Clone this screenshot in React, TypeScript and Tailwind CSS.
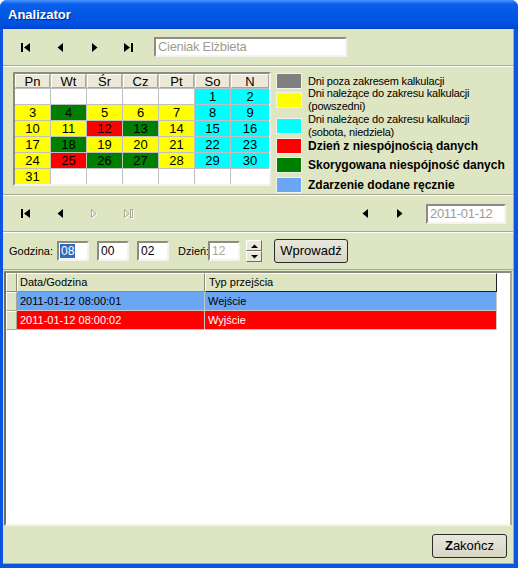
import React from 'react';

type Kind = 'first' | 'prev' | 'next' | 'last';

// small VCR style arrows drawn as svg
const NavIcon = ({ kind, disabled = false }: { kind: Kind; disabled?: boolean }) => {
  if (disabled) {
    const tri = kind === 'next' ? '3.5,0.5 3.5,8.5 8,4.5' : '2.5,0.5 2.5,8.5 7,4.5';
    const shape = (color: string, dx: number) => (
      <g transform={`translate(${dx},${dx})`} fill="none" stroke={color} strokeWidth="1">
        <polygon points={tri} />
        {kind === 'last' && <rect x="8.5" y="0.5" width="2" height="8" />}
      </g>
    );
    return (
      <svg width="12" height="10" viewBox="0 0 12 10">
        {shape('#ffffff', 1)}
        {shape('#aca899', 0)}
      </svg>
    );
  }
  return (
    <svg width="11" height="9" viewBox="0 0 11 9">
      {kind === 'first' && (
        <>
          <rect x="0" y="0" width="2" height="9" fill="#000" />
          <polygon points="9,0 9,9 3,4.5" fill="#000" />
        </>
      )}
      {kind === 'prev' && <polygon points="8,0 8,9 2.5,4.5" fill="#000" />}
      {kind === 'next' && <polygon points="3,0 3,9 8.5,4.5" fill="#000" />}
      {kind === 'last' && (
        <>
          <polygon points="1,0 1,9 7,4.5" fill="#000" />
          <rect x="8" y="0" width="2" height="9" fill="#000" />
        </>
      )}
    </svg>
  );
};

const NavBtn = ({ kind, disabled }: { kind: Kind; disabled?: boolean }) => (
  <div className="w-[34px] h-[24px] flex items-center justify-center">
    <NavIcon kind={kind} disabled={disabled} />
  </div>
);

const sunken = 'border-2 border-t-[#8d8b80] border-l-[#8d8b80] border-b-[#f4f3ee] border-r-[#f4f3ee]';

type C = 'w' | 'y' | 'c' | 'r' | 'g';
const cellBg: Record<C, string> = {
  w: 'bg-white',
  y: 'bg-[#ffff00]',
  c: 'bg-[#00ffff]',
  r: 'bg-[#ff0000]',
  g: 'bg-[#008000]',
};

const calendar =
  'w w w w w c1 c2|y3 g4 y5 y6 y7 c8 c9|y10 y11 r12 g13 y14 c15 c16|y17 g18 y19 y20 y21 c22 c23|y24 r25 g26 g27 y28 c29 c30|y31 w w w w w w';

const weeks = calendar.split('|').map((row) =>
  row.split(' ').map((t) => ({ c: t[0] as C, d: t.slice(1) }))
);

const days = ['Pn', 'Wt', 'Śr', 'Cz', 'Pt', 'So', 'N'];

const legend = [
  { sw: 'bg-[#808080]', lines: ['Dni poza zakresem kalkulacji'], bold: false, mt: 'mt-[6px]' },
  { sw: 'bg-[#ffff00]', lines: ['Dni należące do zakresu kalkulacji', '(powszedni)'], bold: false, mt: 'mt-[3px]' },
  { sw: 'bg-[#00ffff]', lines: ['Dni należące do zakresu kalkulacji', '(sobota, niedziela)'], bold: false, mt: 'mt-[10px]' },
  { sw: 'bg-[#ff0000]', lines: ['Dzień z niespójnością danych'], bold: true, mt: 'mt-[4px]' },
  { sw: 'bg-[#008000]', lines: ['Skorygowana niespójność danych'], bold: true, mt: 'mt-[3px]' },
  { sw: 'bg-[#6aa6f4]', lines: ['Zdarzenie dodane ręcznie'], bold: true, mt: 'mt-[4px]' },
];

const rows = [
  { date: '2011-01-12 08:00:01', type: 'Wejście', bg: 'bg-[#6aa6f4]', fg: 'text-black' },
  { date: '2011-01-12 08:00:02', type: 'Wyjście', bg: 'bg-[#ff0000]', fg: 'text-white' },
];

const SpinArrow = ({ up }: { up: boolean }) => (
  <svg width="7" height="4" viewBox="0 0 7 4">
    <polygon points={up ? '0,4 7,4 3.5,0.5' : '0,0 7,0 3.5,3.5'} fill="#000" />
  </svg>
);

const App = () => {
  return (
    <div className="w-[518px] h-[568px] bg-[#0b55e5] rounded-t-[7px] overflow-hidden flex flex-col font-['Liberation_Sans',Arial,sans-serif] text-black">
      {/* Title bar */}
      <div className="h-[29px] shrink-0 flex items-center pl-[8px] bg-[linear-gradient(to_bottom,#4a95ff_0%,#0a5fe9_14%,#0056e6_55%,#0050df_85%,#0042d0_100%)]">
        <span className="text-white font-bold text-[13px] [text-shadow:1px_1px_0_#0b2a8c]">Analizator</span>
      </div>

      {/* Body */}
      <div className="ml-[3px] mr-[4px] h-[535px] bg-[#dee5c3] border-b border-r border-[#aca899] flex flex-col">
        {/* Person navigation */}
        <div className="h-[37px] border-b border-[#aca899] flex items-center pl-[6px]">
          <NavBtn kind="first" />
          <NavBtn kind="prev" />
          <NavBtn kind="next" />
          <NavBtn kind="last" />
          <div className={`ml-[9px] w-[193px] h-[20px] bg-white ${sunken} flex items-center pl-[2px] text-[13px] tracking-[-0.3px] text-[#9f9d92]`}>
            Cieniak Elżbieta
          </div>
        </div>

        {/* Calendar + legend */}
        <div className="h-[129px] border-t border-white border-b border-b-[#aca899] flex pl-[10px]">
          <div className={`mt-[5px] self-start ${sunken} bg-[#c0c0c0]`}>
            <div className="grid grid-cols-[repeat(6,35px)_38px] gap-px">
              {days.map((d) => (
                <div
                  key={d}
                  className="h-[14px] bg-[#ece9d8] border-t border-l border-white border-b border-r border-b-[#aca899] border-r-[#aca899] flex items-center justify-center text-[13px] leading-none"
                >
                  {d}
                </div>
              ))}
              {weeks.flat().map((cell, i) => (
                <div
                  key={i}
                  className={`h-[15px] ${cellBg[cell.c]} flex items-center justify-center text-[13px] leading-none`}
                >
                  {cell.d}
                </div>
              ))}
            </div>
          </div>

          <div className="ml-[5px] flex flex-col">
            {legend.map((l, i) => (
              <div key={i} className={`${l.mt} h-[16px] flex items-center`}>
                <div className={`w-[26px] h-[16px] shrink-0 border border-[#f3f3ea] ${l.sw}`} />
                <div
                  className={`ml-[6px] whitespace-nowrap ${
                    l.bold ? 'font-bold text-[12px]' : 'text-[11px] tracking-[-0.2px] leading-[13px]'
                  }`}
                >
                  {l.lines.map((t) => (
                    <div key={t}>{t}</div>
                  ))}
                </div>
              </div>
            ))}
          </div>
        </div>

        {/* Event navigation */}
        <div className="h-[37px] border-t border-white border-b border-b-[#aca899] flex items-center pl-[6px] pr-[7px]">
          <NavBtn kind="first" />
          <NavBtn kind="prev" />
          <NavBtn kind="next" disabled />
          <NavBtn kind="last" disabled />
          <div className="flex-1" />
          <NavBtn kind="prev" />
          <NavBtn kind="next" />
          <div className={`ml-[10px] w-[80px] h-[20px] bg-white ${sunken} flex items-center pl-[2px] text-[13px] tracking-[-0.3px] text-[#9f9d92]`}>
            2011-01-12
          </div>
        </div>

        {/* Time entry */}
        <div className="h-[38px] border-t border-white border-b border-b-[#aca899] flex items-center pl-[6px] text-[11px]">
          <span className="w-[48px]">Godzina:</span>
          <div className={`w-[32px] h-[20px] bg-white ${sunken} flex items-center pl-[1px] text-[12px]`}>
            <span className="bg-[#316ac5] text-white h-[14px] px-px flex items-center">08</span>
          </div>
          <div className={`ml-[8px] w-[32px] h-[20px] bg-white ${sunken} flex items-center pl-[2px] text-[12px]`}>00</div>
          <div className={`ml-[8px] w-[32px] h-[20px] bg-white ${sunken} flex items-center pl-[2px] text-[12px]`}>02</div>
          <span className="ml-[9px] w-[30px]">Dzień:</span>
          <div className={`w-[32px] h-[20px] bg-white ${sunken} flex items-center pl-[2px] text-[12px] text-[#aca899]`}>12</div>
          <div className="ml-[6px] flex flex-col">
            <div className="w-[16px] h-[11px] bg-[#ece9d8] border border-t-white border-l-white border-b-[#716f64] border-r-[#716f64] flex items-center justify-center">
              <SpinArrow up />
            </div>
            <div className="w-[16px] h-[11px] bg-[#ece9d8] border border-t-white border-l-white border-b-[#716f64] border-r-[#716f64] flex items-center justify-center">
              <SpinArrow up={false} />
            </div>
          </div>
          <div className="ml-[12px] w-[74px] h-[24px] rounded-[3px] border border-[#2a2a2a] bg-[linear-gradient(to_bottom,#e8e7dc,#d8d6c4)] flex items-center justify-center text-[13px]">
            Wprowadź
          </div>
        </div>

        {/* Event list */}
        <div className="h-[256px] border-t border-[#dee5c3] pl-px pr-[1px]">
          <div className="h-[255px] bg-white border-2 border-t-[#8d8b80] border-l-[#716f64] border-b-[#f4f3ee] border-r-[#aca899] text-[11px]">
            <div className="flex h-[19px]">
              <div className="w-[11px] bg-[#dee5c3] border-t border-l border-white border-b border-r border-b-[#8d8b80] border-r-[#8d8b80]" />
              <div className="w-[188px] bg-[#dee5c3] border-t border-l border-white border-b border-r border-b-[#8d8b80] border-r-[#8d8b80] flex items-center pl-[2px]">
                Data/Godzina
              </div>
              <div className="w-[292px] bg-[#dee5c3] border-t border-l border-white border-b border-r border-b-[#202020] border-r-[#202020] flex items-center pl-[3px]">
                Typ przejścia
              </div>
            </div>
            {rows.map((r) => (
              <div key={r.date} className="flex h-[19px]">
                <div className="w-[11px] bg-[#dee5c3] border-t border-l border-white border-b border-r border-b-[#aca899] border-r-[#aca899]" />
                <div className={`w-[188px] ${r.bg} ${r.fg} border-b border-r border-[#c8c8c8] flex items-center pl-[3px]`}>
                  {r.date}
                </div>
                <div className={`w-[292px] ${r.bg} ${r.fg} border-b border-r border-[#c8c8c8] flex items-center pl-[3px]`}>
                  {r.type}
                </div>
              </div>
            ))}
          </div>
        </div>

        {/* Footer */}
        <div className="flex-1 flex items-center justify-end pr-[6px] pt-[2px]">
          <div className="w-[75px] h-[24px] rounded-[3px] border border-[#2a2a2a] bg-[linear-gradient(to_bottom,#e8e7dc,#d8d6c4)] flex items-center justify-center text-[13px]">
            <span className="font-bold">Z</span>akończ
          </div>
        </div>
      </div>
    </div>
  );
};

export default App;
